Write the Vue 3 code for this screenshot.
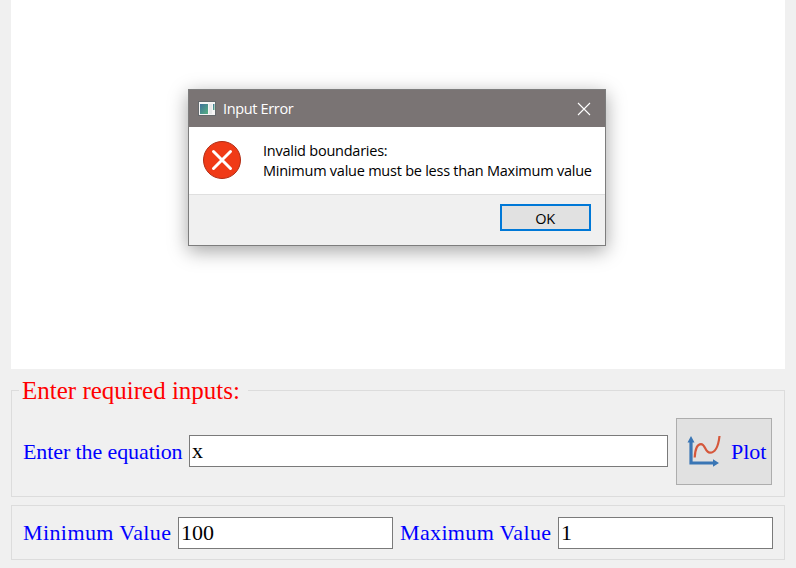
<script setup>
import { ref } from 'vue'

const equation = ref('x')
const minimum = ref('100')
const maximum = ref('1')
const dialogOpen = ref(true)
</script>

<template>
  <main class="window">
    <section class="canvas"></section>

    <section class="group equation-group">
      <h1 class="group-title">Enter required inputs:</h1>
      <label class="label equation-label" for="equation">Enter the equation</label>
      <input id="equation" v-model="equation" class="field equation-field" />
      <button class="plot-button">
        <svg class="plot-icon" width="34" height="34" viewBox="0 0 34 34">
          <path d="M4 8V29H27" fill="none" stroke="#3a76b5" stroke-width="3.200" />
          <path d="M.5 8.500L4 2L7.500 8.500ZM26 25.200L32 29L26 32.700Z" fill="#3a76b5" />
          <path d="M7.700 23.500C8.200 15 10.500 10.200 14 10.200C18.500 10.200 18 18.700 23 18.700C28.500 18.700 31.500 11 32.500 2" fill="none" stroke="#d5573b" stroke-width="2.200" />
        </svg>
        <span class="plot-text">Plot</span>
      </button>
    </section>

    <section class="group range-group">
      <label class="label min-label" for="minimum">Minimum Value</label>
      <input id="minimum" v-model="minimum" class="field range-field" />
      <label class="label max-label" for="maximum">Maximum Value</label>
      <input id="maximum" v-model="maximum" class="field range-field" />
    </section>

    <div v-if="dialogOpen" class="dialog" role="alertdialog">
      <header class="dialog-header">
        <svg class="app-icon" width="18" height="15" viewBox="0 0 18 15">
          <defs>
            <linearGradient id="pane" x1="0" y1="0" x2="1" y2="1">
              <stop offset="0" stop-color="#3e719b" />
              <stop offset="1" stop-color="#55b080" />
            </linearGradient>
          </defs>
          <rect x=".5" y=".5" width="17" height="14" fill="#f5f5f5" stroke="#65696c" />
          <rect x="2" y="3" width="8" height="10" fill="url(#pane)" />
          <rect x="11" y="3" width="3" height="10" fill="#e6e8e9" />
          <rect x="15" y="3" width="1.500" height="6" fill="url(#pane)" />
        </svg>
        <span class="dialog-title">Input Error</span>
        <svg class="close" width="14" height="14" viewBox="0 0 14 14" @click="dialogOpen = false">
          <path d="M1 1L13 13M13 1L1 13" stroke="#fff" stroke-width="1.100" />
        </svg>
      </header>
      <div class="dialog-body">
        <svg class="error-icon" width="38" height="38" viewBox="0 0 38 38">
          <circle cx="19" cy="19" r="18.500" fill="#f03a17" stroke="#b02c14" />
          <path d="M10.500 10.500L27.500 27.500M27.500 10.500L10.500 27.500" stroke="#fff" stroke-width="3" stroke-linecap="round" />
        </svg>
        <p class="message">Invalid boundaries:<br />Minimum value must be less than Maximum value</p>
      </div>
      <footer class="dialog-footer">
        <button class="ok" @click="dialogOpen = false">OK</button>
      </footer>
    </div>
  </main>
</template>

<style>
body {
  background: #f0f0f0;
  overflow: hidden;
}
</style>

<style scoped>
* {
  box-sizing: border-box;
}
.window {
  width: 796px;
  height: 568px;
  padding: 0 11px;
  background: #f0f0f0;
  font-family: "Liberation Serif", "Times New Roman", serif;
}
.canvas {
  height: 369px;
  background: #fff;
}
.group {
  display: flex;
  align-items: center;
  border: 1px solid #dcdcdc;
}
.equation-group {
  position: relative;
  height: 107px;
  margin-top: 21px;
  padding: 15px 12px 0 11px;
}
.group-title {
  position: absolute;
  left: 7px;
  top: -15px;
  width: 229px;
  height: 30px;
  margin: 0;
  padding-left: 3px;
  background: #f0f0f0;
  color: #f00;
  font-size: 25px;
  font-weight: 400;
  line-height: 30px;
  white-space: nowrap;
}
.range-group {
  height: 55px;
  margin-top: 8px;
  padding: 0 11px;
}
.label {
  flex: none;
  color: #00f;
  font-size: 22px;
  line-height: 32px;
  white-space: nowrap;
}
.equation-label {
  width: 166px;
  padding-top: 2px;
  letter-spacing: -0.1px;
}
.min-label {
  width: 155px;
  letter-spacing: 0.4px;
}
.max-label {
  width: 158px;
  letter-spacing: 0.35px;
}
.field {
  height: 32px;
  margin: 0;
  padding: 0 2px;
  border: 1px solid #7a7a7a;
  border-radius: 0;
  outline: 0;
  background: #fff;
  color: #000;
  font: 22px "Liberation Serif", serif;
}
.equation-field {
  width: 479px;
}
.range-field {
  width: 215px;
}
.min-label + .range-field {
  margin-right: 7px;
}
.plot-button {
  display: flex;
  align-items: center;
  width: 96px;
  height: 67px;
  margin: 0 0 0 8px;
  padding: 0 0 0 10px;
  border: 1px solid #adadad;
  background: #e1e1e1;
  color: #00f;
  font: 22px "Liberation Serif", serif;
}
.plot-icon {
  flex: none;
  margin-right: 10px;
}
.plot-text {
  padding-top: 2px;
}
.dialog {
  position: absolute;
  left: 188px;
  top: 89px;
  width: 418px;
  height: 157px;
  border: 1px solid #7d7d7d;
  background: #fff;
  box-shadow: 0 5px 18px rgba(0, 0, 0, 0.36);
  color: #000;
  font: 14.5px/20px "Open Sans", "Segoe UI", sans-serif;
  letter-spacing: -0.24px;
}
.dialog-header {
  display: flex;
  align-items: center;
  height: 37px;
  padding: 0 14px 0 9px;
  background: #7a7474;
  color: #fff;
}
.app-icon,
.close,
.error-icon {
  flex: none;
}
.dialog-title {
  margin-left: 7px;
  letter-spacing: -0.35px;
}
.close {
  margin-left: auto;
}
.dialog-body {
  display: flex;
  height: 67px;
  padding: 14px 0 0 14px;
}
.message {
  margin: 0 0 0 22px;
  white-space: nowrap;
}
.dialog-footer {
  display: flex;
  justify-content: flex-end;
  height: 51px;
  padding: 9px 14px 0 0;
  border-top: 1px solid #dfdfdf;
  background: #f0f0f0;
}
.ok {
  width: 91px;
  height: 27px;
  padding: 2px 1px 0 0;
  border: 2px solid #0078d7;
  background: #e1e1e1;
  color: #000;
  font: 14.5px/20px "Open Sans", "Segoe UI", sans-serif;
  letter-spacing: -0.24px;
}
</style>
